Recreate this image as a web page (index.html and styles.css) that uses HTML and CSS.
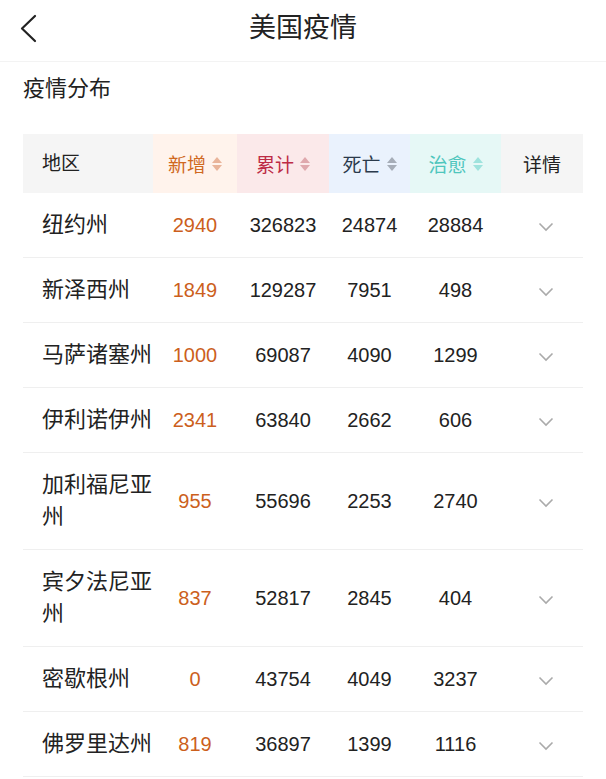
FILE: index.html
```html
<!DOCTYPE html>
<html lang="zh-CN">
<head>
<meta charset="utf-8">
<title>美国疫情</title>
<link rel="stylesheet" href="styles.css">
</head>
<body>
<header class="nav">
  <span class="back">
    <svg width="18" height="30" viewBox="0 0 18 30"><path d="M15 2 L2 14.5 L15 27" fill="none" stroke="#222" stroke-width="2.2" stroke-linecap="round" stroke-linejoin="round"/></svg>
  </span>
  <h1 class="nav-title">美国疫情</h1>
</header>
<h2 class="section-title">疫情分布</h2>
<div class="table">
  <div class="row head">
    <div class="cell name">地区</div>
    <div class="cell c-new">新增<i class="sort"><b class="up"></b><b class="down"></b></i></div>
    <div class="cell c-total">累计<i class="sort"><b class="up"></b><b class="down"></b></i></div>
    <div class="cell c-dead">死亡<i class="sort"><b class="up"></b><b class="down"></b></i></div>
    <div class="cell c-cure">治愈<i class="sort"><b class="up"></b><b class="down"></b></i></div>
    <div class="cell detail">详情</div>
  </div>
  <div class="row"><div class="cell name">纽约州</div><div class="cell num new">2940</div><div class="cell num">326823</div><div class="cell num">24874</div><div class="cell num">28884</div><div class="cell detail"><svg class="chev" width="16" height="10" viewBox="0 0 16 10"><path d="M1.5 1.5 L8 8 L14.5 1.5" fill="none" stroke="#aaa" stroke-width="1.6"/></svg></div></div>
  <div class="row"><div class="cell name">新泽西州</div><div class="cell num new">1849</div><div class="cell num">129287</div><div class="cell num">7951</div><div class="cell num">498</div><div class="cell detail"><svg class="chev" width="16" height="10" viewBox="0 0 16 10"><path d="M1.5 1.5 L8 8 L14.5 1.5" fill="none" stroke="#aaa" stroke-width="1.6"/></svg></div></div>
  <div class="row"><div class="cell name">马萨诸塞州</div><div class="cell num new">1000</div><div class="cell num">69087</div><div class="cell num">4090</div><div class="cell num">1299</div><div class="cell detail"><svg class="chev" width="16" height="10" viewBox="0 0 16 10"><path d="M1.5 1.5 L8 8 L14.5 1.5" fill="none" stroke="#aaa" stroke-width="1.6"/></svg></div></div>
  <div class="row"><div class="cell name">伊利诺伊州</div><div class="cell num new">2341</div><div class="cell num">63840</div><div class="cell num">2662</div><div class="cell num">606</div><div class="cell detail"><svg class="chev" width="16" height="10" viewBox="0 0 16 10"><path d="M1.5 1.5 L8 8 L14.5 1.5" fill="none" stroke="#aaa" stroke-width="1.6"/></svg></div></div>
  <div class="row"><div class="cell name">加利福尼亚州</div><div class="cell num new">955</div><div class="cell num">55696</div><div class="cell num">2253</div><div class="cell num">2740</div><div class="cell detail"><svg class="chev" width="16" height="10" viewBox="0 0 16 10"><path d="M1.5 1.5 L8 8 L14.5 1.5" fill="none" stroke="#aaa" stroke-width="1.6"/></svg></div></div>
  <div class="row"><div class="cell name">宾夕法尼亚州</div><div class="cell num new">837</div><div class="cell num">52817</div><div class="cell num">2845</div><div class="cell num">404</div><div class="cell detail"><svg class="chev" width="16" height="10" viewBox="0 0 16 10"><path d="M1.5 1.5 L8 8 L14.5 1.5" fill="none" stroke="#aaa" stroke-width="1.6"/></svg></div></div>
  <div class="row"><div class="cell name">密歇根州</div><div class="cell num new">0</div><div class="cell num">43754</div><div class="cell num">4049</div><div class="cell num">3237</div><div class="cell detail"><svg class="chev" width="16" height="10" viewBox="0 0 16 10"><path d="M1.5 1.5 L8 8 L14.5 1.5" fill="none" stroke="#aaa" stroke-width="1.6"/></svg></div></div>
  <div class="row"><div class="cell name">佛罗里达州</div><div class="cell num new">819</div><div class="cell num">36897</div><div class="cell num">1399</div><div class="cell num">1116</div><div class="cell detail"><svg class="chev" width="16" height="10" viewBox="0 0 16 10"><path d="M1.5 1.5 L8 8 L14.5 1.5" fill="none" stroke="#aaa" stroke-width="1.6"/></svg></div></div>
</div>
</body>
</html>
```

FILE: styles.css
```css
* { box-sizing: border-box; }
html, body {
  margin: 0;
  padding: 0;
  background: #fff;
  font-family: "Liberation Sans", "Noto Sans CJK SC", sans-serif;
  color: #222;
}
.nav {
  position: relative;
  height: 62px;
  border-bottom: 1px solid #f3f3f3;
  display: flex;
  justify-content: center;
  align-items: flex-start;
  padding-top: 10px;
}
.back {
  position: absolute;
  left: 20px;
  top: 14px;
  display: block;
  line-height: 0;
}
.nav-title {
  margin: 0;
  font-size: 27px;
  line-height: 36px;
  font-weight: 400;
  color: #222;
}
.section-title {
  margin: 12px 0 0 23px;
  font-size: 22px;
  line-height: 30px;
  font-weight: 400;
  color: #222;
}
.table {
  margin: 30px 23px 0 23px;
  width: 560px;
}
.row {
  display: grid;
  grid-template-columns: 130px 84px 92px 81px 91px 82px;
  border-bottom: 1px solid #efefef;
}
.row.head {
  height: 59px;
  background: #f5f5f5;
  border-bottom: none;
}
.cell {
  display: flex;
  align-items: center;
  justify-content: center;
}
.head .cell {
  font-size: 19px;
  color: #222;
}
.name {
  justify-content: flex-start;
  padding: 16px 0 16px 19px;
  font-size: 22px;
  line-height: 32px;
}
.head .name {
  padding: 0 0 0 19px;
  font-size: 19px;
}
.num {
  font-size: 20px;
  color: #222;
}
.num.new { color: #cc5f1d; }
.c-new { background: #fff3ec; color: #d0691f !important; }
.c-total { background: #fbe9ea; color: #bd2b45 !important; }
.c-dead { background: #eaf2fd; color: #2b3a4c !important; }
.c-cure { background: #e6f8f6; color: #4fc6bd !important; }
.detail { padding-left: 8px; }
.head .detail { padding-left: 0; }
.sort {
  display: inline-flex;
  flex-direction: column;
  gap: 2px;
  margin-left: 6px;
}
.sort b {
  display: block;
  width: 0;
  height: 0;
  border-left: 5px solid transparent;
  border-right: 5px solid transparent;
}
.sort .up { border-bottom: 6px solid currentColor; }
.sort .down { border-top: 6px solid currentColor; }
.c-new .sort { color: #e9b49a; }
.c-total .sort { color: #dfa8ad; }
.c-dead .sort { color: #a6adb8; }
.c-cure .sort { color: #9ee3dd; }
.chev { display: block; margin-top: 4px; }
```
